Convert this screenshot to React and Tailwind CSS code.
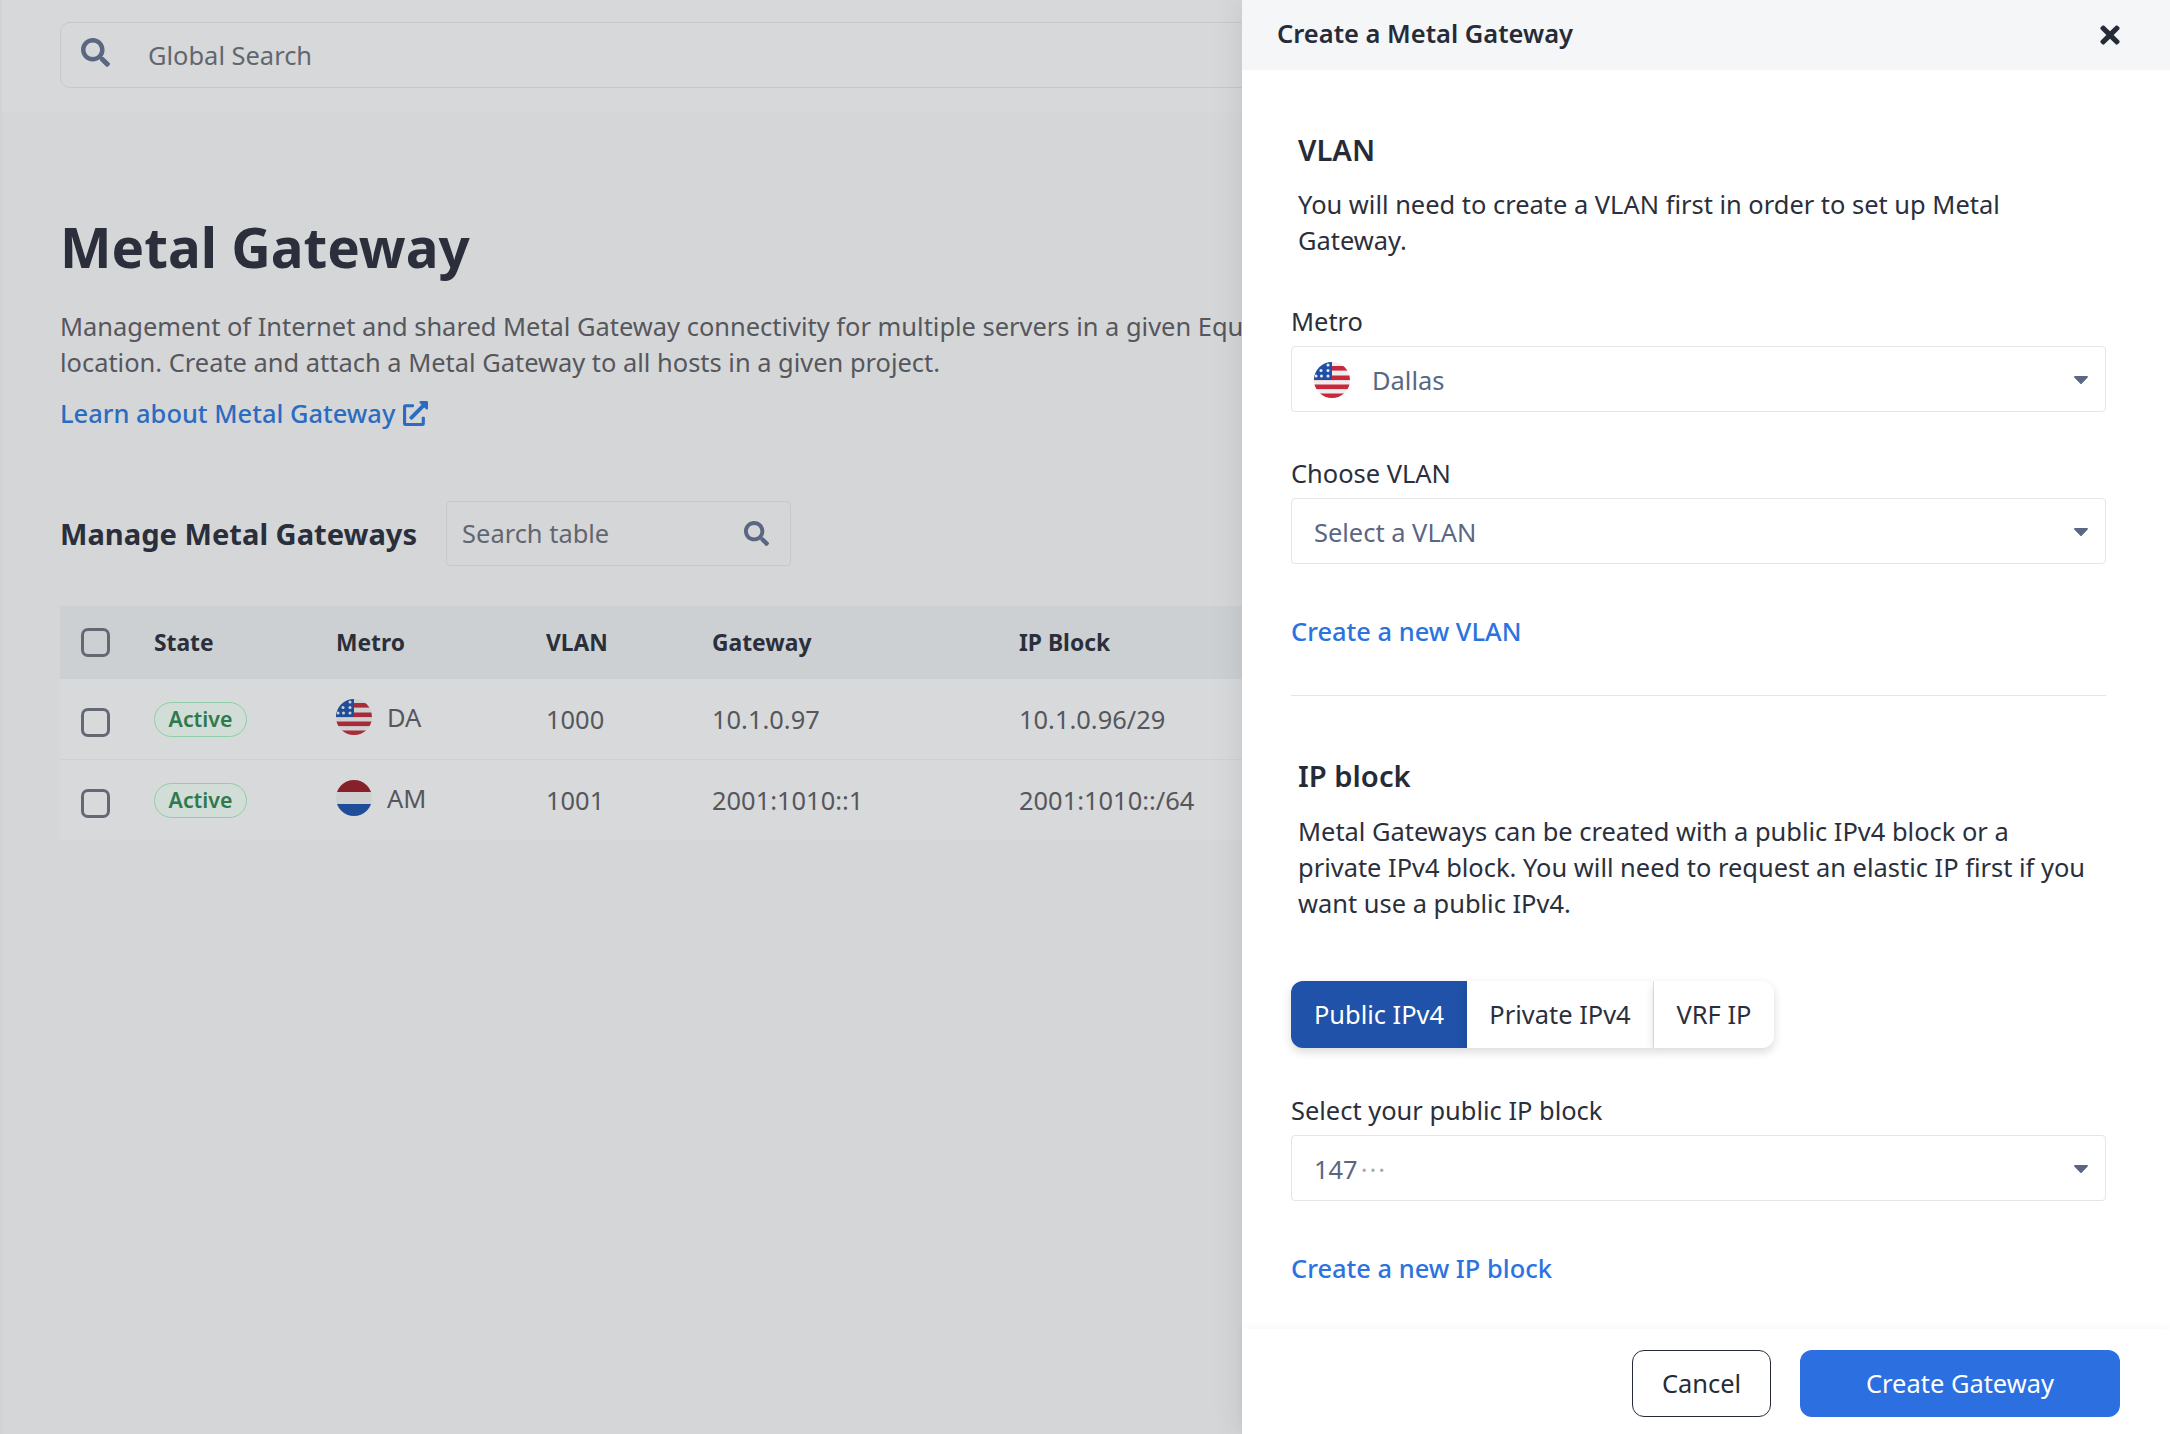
import React from "react";
import { FaSearch, FaExternalLinkAlt, FaTimes, FaCaretDown } from "react-icons/fa";

function USFlag({ id, dim }) {
  const stripe = dim ? "#a82c38" : "#c9283a";
  const white = dim ? "#cfd0d2" : "#eeeeee";
  const blue = dim ? "#1f4d9a" : "#1f4fa8";
  return (
    <svg width="36" height="36" viewBox="0 0 36 36" className="shrink-0">
      <defs>
        <clipPath id={id}><circle cx="18" cy="18" r="18" /></clipPath>
      </defs>
      <g clipPath={`url(#${id})`}>
        <rect width="36" height="36" fill={white} />
        <rect x="18" y="4" width="18" height="4.6" fill={stripe} />
        <rect x="0" y="13.5" width="36" height="4.6" fill={stripe} />
        <rect x="0" y="22.5" width="36" height="4.6" fill={stripe} />
        <rect x="0" y="31.5" width="36" height="4.6" fill={stripe} />
        <rect x="0" y="0" width="18" height="18" fill={blue} />
        {[[14, 3], [7, 8.5], [14, 8.5], [2, 14], [7.5, 14], [14, 14]].map(([x, y], i) => (
          <circle key={i} cx={x} cy={y} r="1.5" fill={white} />
        ))}
      </g>
    </svg>
  );
}

function NLFlag() {
  return (
    <svg width="36" height="36" viewBox="0 0 36 36" className="shrink-0">
      <defs>
        <clipPath id="nl"><circle cx="18" cy="18" r="18" /></clipPath>
      </defs>
      <g clipPath="url(#nl)">
        <rect width="36" height="12" fill="#862029" />
        <rect y="12" width="36" height="12" fill="#cfd0d2" />
        <rect y="24" width="36" height="12" fill="#1f4d9a" />
      </g>
    </svg>
  );
}

function Checkbox() {
  return <span className="block h-[29px] w-[29px] rounded-[7px] border-[3px] border-[#636874]" />;
}

function Pill() {
  return (
    <span className="flex h-[35px] w-[93px] items-center justify-center rounded-full border border-[#8ccfa8] bg-[#d3ddd8] text-[21.3px] font-semibold text-[#2d7a4d]">
      Active
    </span>
  );
}

const cols = "grid grid-cols-[73px_182px_210px_166px_307px_1fr] items-center pl-[21px]";

function Row({ flag, code, vlan, gw, ip, border }) {
  return (
    <div className={`${cols} ${border ? "h-[81px] border-b border-[#cfd1d3]" : "h-[80px]"} bg-[#d8d9db] text-[25.45px] text-[#55575c]`}>
      <div className="pt-[6px]"><Checkbox /></div>
      <div><Pill /></div>
      <div className="-mt-[4px] flex items-center gap-[15px]">
        {flag}
        <span className="leading-[36px]">{code}</span>
      </div>
      <div className="pt-[1px]">{vlan}</div>
      <div className="pt-[1px]">{gw}</div>
      <div className="pt-[1px]">{ip}</div>
    </div>
  );
}

function Select({ children }) {
  return (
    <div className="mt-[7px] flex h-[66px] w-[815px] items-center justify-between rounded-[4px] border border-[#e3e5ea] bg-white pl-[22px] pr-[12px] text-[25.45px] text-[#5a6782]">
      <div className="flex items-center pt-[3px]">{children}</div>
      <FaCaretDown className="h-[24px] w-[24px] text-[#5a6782]" />
    </div>
  );
}

function Label({ children, className = "" }) {
  return <div className={`text-[25.45px] leading-[36px] text-[#2a2f3b] ${className}`}>{children}</div>;
}

function Head({ children, className = "" }) {
  return <h3 className={`pl-[7px] text-[29.2px] font-semibold leading-[36px] text-[#262b38] ${className}`}>{children}</h3>;
}

export default function App() {
  return (
    <div
      className="relative h-[1434px] w-full overflow-hidden border-l-2 border-[#d1d3d6] bg-[#d5d6d8] text-[25.45px]"
      style={{ fontFamily: '"Noto Sans", sans-serif' }}
    >
      <div className="h-[113px] bg-[#d7d8da] pl-[58px] pt-[22px]">
        <div className="flex h-[66px] w-[1300px] items-center rounded-[10px] border border-[#c6c8cb]">
          <FaSearch className="ml-[20px] -mt-[6px] h-[29px] w-[29px] text-[#5a6782]" />
          <span className="ml-[38px] text-[#62666f]">Global Search</span>
        </div>
      </div>

      <div className="pl-[58px]">
        <h1 className="mt-[96px] text-[54.7px] font-bold leading-[76px] text-[#2a2f3b]">Metal Gateway</h1>
        <p className="mt-[23px] w-[1182px] overflow-hidden whitespace-nowrap leading-[36px] text-[#55575c]">
          Management of Internet and shared Metal Gateway connectivity for multiple servers in a given Equinix Metal
          <br />
          location. Create and attach a Metal Gateway to all hosts in a given project.
        </p>
        <a className="mt-[15px] flex items-center font-medium leading-[36px] text-[#2b6cc0]">
          Learn about Metal Gateway
          <FaExternalLinkAlt className="ml-[8px] h-[25px] w-[25px]" />
        </a>

        <div className="mt-[70px] flex items-center">
          <h2 className="text-[29.1px] font-bold leading-[36px] text-[#2a2f3b]">Manage Metal Gateways</h2>
          <div className="ml-[29px] flex h-[65px] w-[345px] items-center justify-between rounded-[4px] border border-[#c6c8cb] pl-[15px] pr-[21px]">
            <span className="text-[#62666f]">Search table</span>
            <FaSearch className="h-[25px] w-[25px] text-[#5a6782]" />
          </div>
        </div>

        <div className="mt-[40px]">
          <div className={`${cols} h-[73px] bg-[#cdd0d3] text-[22.8px] font-bold text-[#2a2f3b]`}>
            <div><Checkbox /></div>
            <div className="pt-[2px]">State</div>
            <div className="pt-[2px]">Metro</div>
            <div className="pt-[2px]">VLAN</div>
            <div className="pt-[2px]">Gateway</div>
            <div className="pt-[2px]">IP Block</div>
          </div>
          <Row flag={<USFlag id="us1" dim />} code="DA" vlan="1000" gw="10.1.0.97" ip="10.1.0.96/29" border />
          <Row flag={<NLFlag />} code="AM" vlan="1001" gw="2001:1010::1" ip="2001:1010::/64" />
        </div>
      </div>

      <aside className="absolute bottom-0 right-0 top-0 flex w-[928px] flex-col bg-white shadow-[0_0_30px_rgba(0,0,0,0.1)]">
        <header className="flex h-[70px] shrink-0 items-center justify-between bg-[#f5f6f8] pl-[35px] pr-[48px]">
          <span className="-mt-[4px] text-[25.5px] font-semibold text-[#262b38]">Create a Metal Gateway</span>
          <FaTimes className="h-[28px] w-[24px] text-[#262b38]" />
        </header>

        <div className="flex-1 pl-[49px] pt-[62px]">
          <Head>VLAN</Head>
          <p className="mt-[18px] w-[760px] pl-[7px] leading-[36px] text-[#2a2f3b]">
            You will need to create a VLAN first in order to set up Metal Gateway.
          </p>
          <Label className="mt-[45px]">Metro</Label>
          <Select>
            <USFlag id="us2" />
            <span className="ml-[22px]">Dallas</span>
          </Select>
          <Label className="mt-[43px]">Choose VLAN</Label>
          <Select>Select a VLAN</Select>
          <a className="mt-[49px] block font-medium leading-[36px] text-[#2b73e0]">Create a new VLAN</a>
          <div className="mt-[46px] h-px w-[815px] bg-[#e3e5ea]" />
          <Head className="mt-[62px]">IP block</Head>
          <p className="mt-[19px] w-[800px] pl-[7px] leading-[36px] text-[#2a2f3b]">
            Metal Gateways can be created with a public IPv4 block or a private IPv4 block. You will need to request an elastic IP first if you want use a public IPv4.
          </p>
          <div className="mt-[60px] flex h-[67px] items-stretch">
            <span className="flex w-[176px] items-center justify-center rounded-l-[12px] bg-[#1f52a8] text-white shadow-[0_4px_10px_rgba(0,0,0,0.15)]">Public IPv4</span>
            <span className="flex w-[187px] items-center justify-center border-r border-[#e3e5ea] bg-white text-[#2a2f3b] shadow-[0_4px_10px_rgba(0,0,0,0.15)]">Private IPv4</span>
            <span className="flex w-[120px] items-center justify-center rounded-r-[12px] bg-white text-[#2a2f3b] shadow-[0_4px_10px_rgba(0,0,0,0.15)]">VRF IP</span>
          </div>
          <Label className="mt-[44px]">Select your public IP block</Label>
          <Select>
            147<span className="ml-[3px] tracking-[2px] text-[#a4a9b6]">···</span>
          </Select>
          <a className="mt-[49px] block font-medium leading-[36px] text-[#2b73e0]">Create a new IP block</a>
        </div>

        <footer className="flex h-[105px] shrink-0 items-start justify-end gap-[29px] bg-white pr-[50px] pt-[21px] shadow-[0_-2px_8px_rgba(0,0,0,0.03)]">
          <button className="h-[67px] w-[139px] rounded-[12px] border border-[#262b38] bg-white text-[#262b38]">Cancel</button>
          <button className="h-[67px] w-[320px] rounded-[12px] bg-[#2c6fe0] text-white">Create Gateway</button>
        </footer>
      </aside>
    </div>
  );
}
